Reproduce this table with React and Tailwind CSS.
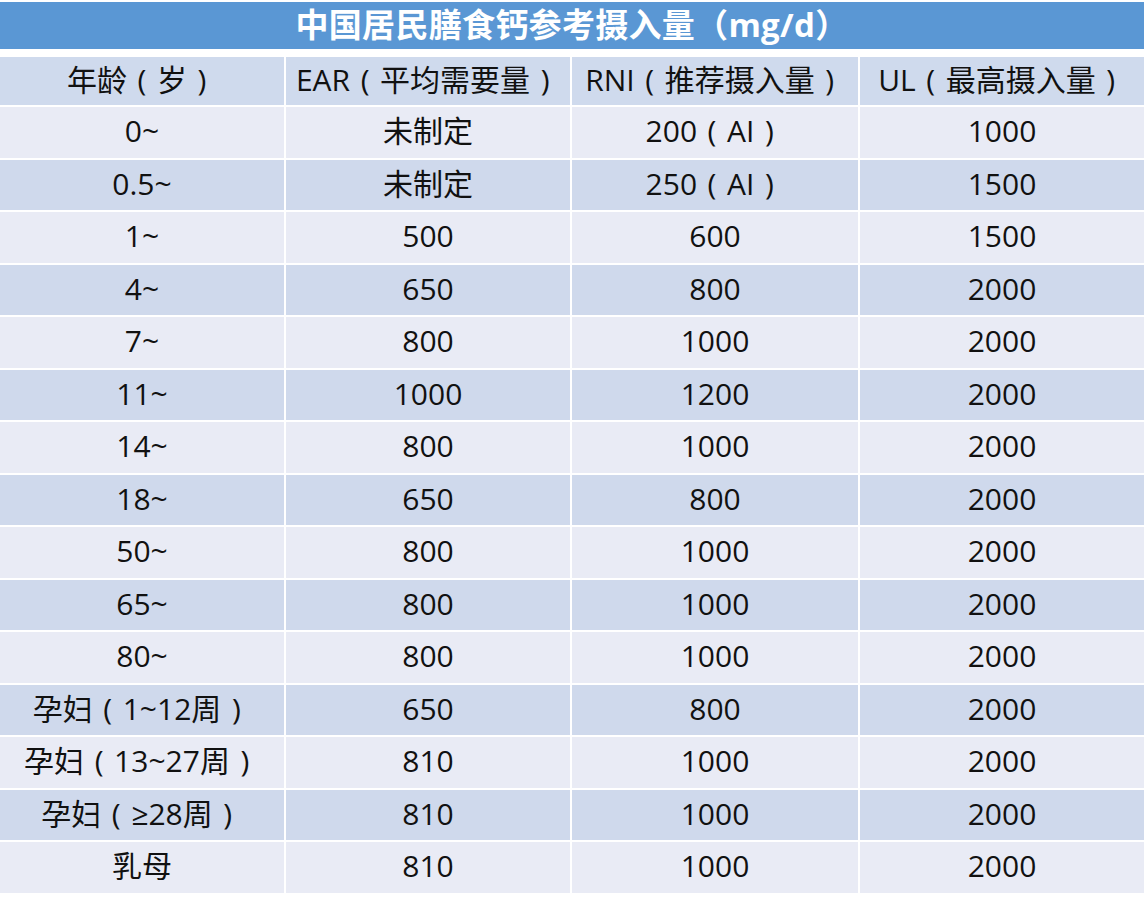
import React from 'react'

const rows = [
  ['0~', '未制定', '200（AI）', '1000'],
  ['0.5~', '未制定', '250（AI）', '1500'],
  ['1~', '500', '600', '1500'],
  ['4~', '650', '800', '2000'],
  ['7~', '800', '1000', '2000'],
  ['11~', '1000', '1200', '2000'],
  ['14~', '800', '1000', '2000'],
  ['18~', '650', '800', '2000'],
  ['50~', '800', '1000', '2000'],
  ['65~', '800', '1000', '2000'],
  ['80~', '800', '1000', '2000'],
  ['孕妇（1~12周）', '650', '800', '2000'],
  ['孕妇（13~27周）', '810', '1000', '2000'],
  ['孕妇（≥28周）', '810', '1000', '2000'],
  ['乳母', '810', '1000', '2000'],
]

const header = ['年龄（岁）', 'EAR（平均需要量）', 'RNI（推荐摄入量）', 'UL（最高摄入量）']

const font = { fontFamily: '"Open Sans", "Noto Sans CJK SC", sans-serif' }

// full-width parens drawn centred in their box, as in the original table
const Cell = ({ text }) => {
  const parts = text.split(/([（）])/)
  return (
    <>
      {parts.map((p, k) =>
        p === '（' || p === '）' ? (
          <span key={k} className="inline-block w-[1em] text-center">
            {p === '（' ? '(' : ')'}
          </span>
        ) : (
          <span key={k}>{p}</span>
        )
      )}
    </>
  )
}

const App = () => {
  return (
    <div className="w-[1144px] h-[900px] bg-white pt-[2px]" style={font}>
      <div className="h-[47px] bg-[#5a97d4] flex items-center justify-center text-white text-[33px] font-bold tracking-[0.3px] pb-[2px]">
        中国居民膳食钙参考摄入量（mg/d）
      </div>
      <div className="mt-[8px] grid grid-cols-[284px_284px_286px_284px] gap-[2px] text-[30px] text-[#111]">
        {header.map((h) => (
          <div key={h} className="h-[48px] bg-[#cfdaed] flex items-center justify-center whitespace-nowrap pb-[3px]">
            <Cell text={h} />
          </div>
        ))}
        {rows.map((row, i) =>
          row.map((cell, j) => (
            <div
              key={i + '-' + j}
              className={`h-[50.5px] flex items-center justify-center whitespace-nowrap pb-[3px] ${
                i % 2 === 0 ? 'bg-[#e9ebf5]' : 'bg-[#cfd9ec]'
              }`}
            >
              <Cell text={cell} />
            </div>
          ))
        )}
      </div>
    </div>
  )
}

export default App
